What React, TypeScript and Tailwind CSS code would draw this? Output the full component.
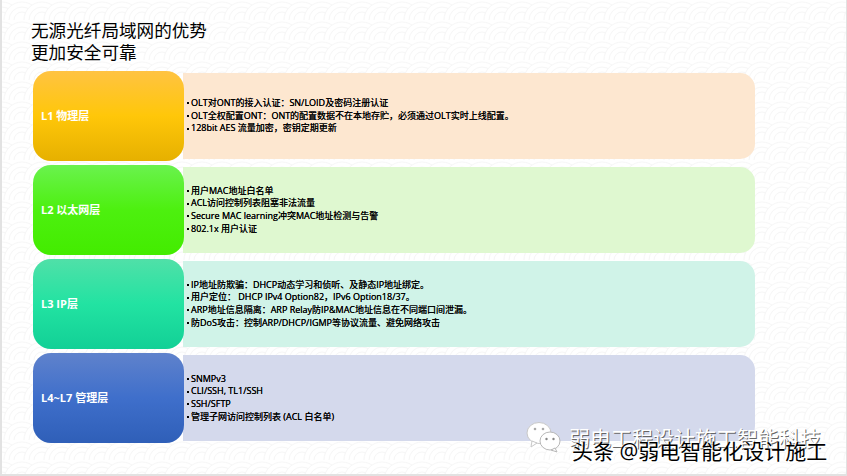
const font = "font-['Open_Sans','Noto_Sans_CJK_SC',sans-serif]"

const layers = [
  {
    name: "L1 物理层",
    grad: "bg-[linear-gradient(180deg,#ffc342_0%,#ffc709_50%,#e6b000_100%)]",
    body: "bg-[#fde7d0]",
    lines: [
      "OLT对ONT的接入认证：SN/LOID及密码注册认证",
      "OLT全权配置ONT：ONT的配置数据不在本地存贮，必须通过OLT实时上线配置。",
      "128bit AES 流量加密，密钥定期更新",
    ],
  },
  {
    name: "L2 以太网层",
    grad: "bg-[linear-gradient(180deg,#6af24e_0%,#4df00f_50%,#43ec00_100%)]",
    body: "bg-[#dff8d0]",
    lines: [
      "用户MAC地址白名单",
      "ACL访问控制列表阻塞非法流量",
      "Secure MAC learning冲突MAC地址检测与告警",
      "802.1x 用户认证",
    ],
  },
  {
    name: "L3 IP层",
    grad: "bg-[linear-gradient(180deg,#50e0a8_0%,#22e3a2_50%,#12d096_100%)]",
    body: "bg-[#d0f3e8]",
    lines: [
      "IP地址防欺骗：DHCP动态学习和侦听、及静态IP地址绑定。",
      "用户定位： DHCP IPv4 Option82，IPv6 Option18/37。",
      "ARP地址信息隔离：ARP Relay防IP&MAC地址信息在不同端口间泄漏。",
      "防DoS攻击：控制ARP/DHCP/IGMP等协议流量、避免网络攻击",
    ],
  },
  {
    name: "L4~L7 管理层",
    grad: "bg-[linear-gradient(180deg,#5f82cc_0%,#3f6fcb_50%,#2f5fb8_100%)]",
    body: "bg-[#d4d9ec]",
    lines: ["SNMPv3", "CLI/SSH, TL1/SSH", "SSH/SFTP", "管理子网访问控制列表 (ACL 白名单)"],
  },
]

function Row({ layer }: { layer: (typeof layers)[number] }) {
  return (
    <div className="flex h-[90px] items-center">
      <div className={`z-10 flex h-full w-[151px] shrink-0 items-center rounded-[18px] pl-[8px] text-[11px] font-bold text-white ${layer.grad}`}>
        {layer.name}
      </div>
      <div className={`-ml-px flex h-[86px] w-[572px] flex-col justify-center rounded-r-[15px] pl-[4px] text-[9px] leading-[12.7px] text-black [text-shadow:0_0_0.3px_#000000] ${layer.body}`}>
        {layer.lines.map((line) => (
          <div key={line} className="flex items-center whitespace-pre">
            <span className="mr-[2px] h-[2px] w-[2px] bg-black" />
            {line}
          </div>
        ))}
      </div>
    </div>
  )
}

export default function App() {
  return (
    <div className={`relative h-[476px] w-[847px] overflow-hidden bg-[#e2e2e2] ${font}`}>
      <div className="relative ml-[2px] h-[474px] w-[844px] overflow-hidden bg-white">
        <svg className="absolute inset-0 h-full w-full" aria-hidden="true">
          <defs>
            <pattern id="wave" width="40" height="20" patternUnits="userSpaceOnUse">
              {[0, 20, 40].map((x) => (
                <g key={x} fill="none" stroke="#f6f6f6" strokeWidth="1">
                  <circle cx={x} cy="20" r="18" fill="#ffffff" />
                  <circle cx={x} cy="20" r="13" />
                  <circle cx={x} cy="20" r="8" />
                </g>
              ))}
            </pattern>
          </defs>
          <rect width="100%" height="100%" fill="url(#wave)" />
        </svg>
        <div className="relative pl-[29px] pt-[19px]">
          <h1 className="h-[52px] text-[17.6px] font-normal leading-[22px] text-black">
            无源光纤局域网的优势
            <br />
            更加安全可靠
          </h1>
          <div className="ml-[2px] flex flex-col gap-[4px]">
            {layers.map((layer) => (
              <Row key={layer.name} layer={layer} />
            ))}
          </div>
        </div>
      </div>
      <svg className="absolute left-[526px] top-[421px] h-[32px] w-[36px]" viewBox="0 0 36 32" aria-hidden="true">
        <ellipse cx="13" cy="12" rx="12" ry="10.5" fill="#ffffff" stroke="#c8c8c8" />
        <path d="M6 20 L5 26 L11 22 Z" fill="#ffffff" stroke="#c8c8c8" />
        <ellipse cx="24" cy="20" rx="10" ry="9" fill="#ffffff" stroke="#b8b8b8" />
        <path d="M29 27 L31 31 L25 29 Z" fill="#ffffff" stroke="#b8b8b8" />
        <circle cx="20.5" cy="18" r="1.2" fill="#888888" />
        <circle cx="27.5" cy="18" r="1.2" fill="#888888" />
        <circle cx="9" cy="8" r="1.3" fill="#aaaaaa" />
        <circle cx="17" cy="8" r="1.3" fill="#aaaaaa" />
      </svg>
      <div className="absolute left-[569px] top-[425px] whitespace-nowrap text-[21px] leading-[26px] text-white [text-shadow:1px_1px_0_#666666]">
        弱电工程设计施工智能科技
      </div>
      <div className="absolute left-[572px] top-[438px] whitespace-nowrap text-[21px] leading-[26px] text-black [text-shadow:0_0_2px_#ffffff,1px_1px_0_#ffffff]">
        头条 @弱电智能化设计施工
      </div>
    </div>
  )
}
